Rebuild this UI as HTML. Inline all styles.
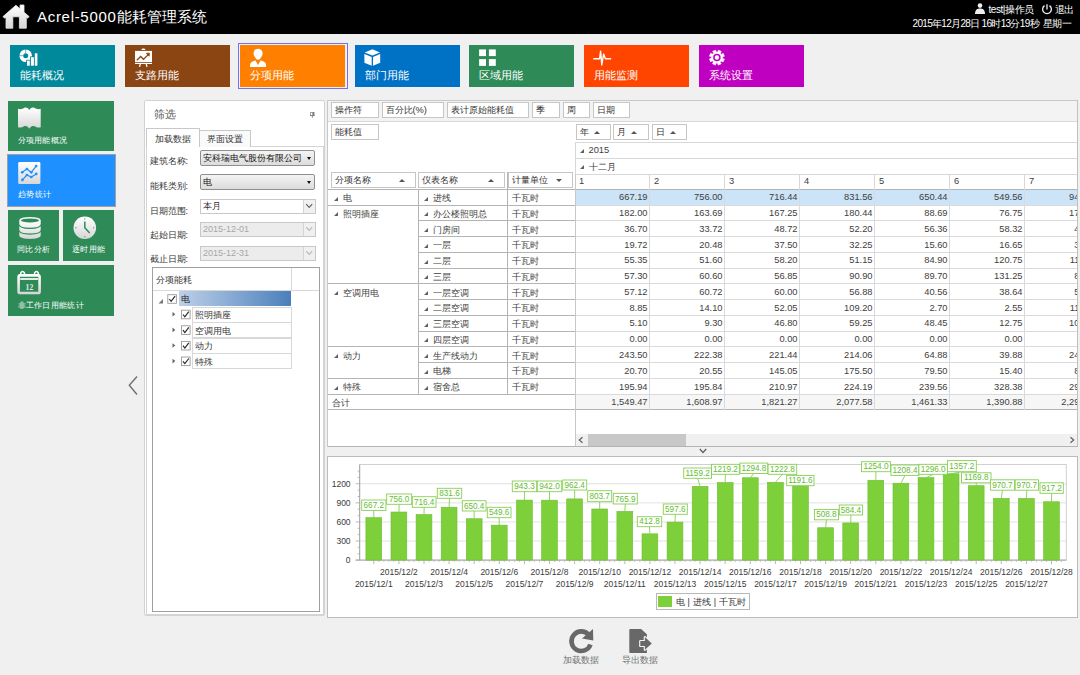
<!DOCTYPE html><html><head><meta charset="utf-8"><style>
*{margin:0;padding:0;box-sizing:border-box}
html,body{width:1080px;height:675px;overflow:hidden;background:#f0f0f0;font-family:"Liberation Sans",sans-serif;color:#333}
.a{position:absolute}
.nw{white-space:nowrap}
.hdr{left:0;top:0;width:1080px;height:34px;background:#000}
.tile{height:42px;top:45px;width:105px;color:#fff}
.tile .t{position:absolute;left:9.5px;top:24px;font-size:10.5px;line-height:13px;white-space:nowrap}
.tile svg{position:absolute;left:9px;top:4px}
.lt{color:#fff;background:#2e8b57}
.lt .t{position:absolute;left:9.5px;font-size:8px;line-height:11px;letter-spacing:0.3px;white-space:nowrap}
.lbl{position:absolute;left:149.5px;font-size:9px;line-height:12px;color:#333;white-space:nowrap}
.cb{position:absolute;left:200px;width:115px;height:16px;border:1px solid #8f8f8f;border-radius:2px;background:linear-gradient(#f4f4f4,#dcdcdc);font-size:9px;line-height:15px;padding-left:2px;color:#111;white-space:nowrap;overflow:hidden}
.cb .tx{position:absolute;left:2px;top:0;width:99px;overflow:hidden}
.cb .ar{position:absolute;left:105.5px;top:6px;width:0;height:0;border-left:2.5px solid transparent;border-right:2.5px solid transparent;border-top:3px solid #111}
.dp{position:absolute;left:200px;width:115.5px;height:15px;border:1px solid #c8c8c8;background:#fff;font-size:9px;line-height:13px;padding-left:2px;white-space:nowrap}
.dp .btn{position:absolute;right:0;top:0;width:12px;height:13px;border-left:1px solid #d4d4d4;background:#f0f0f0}
.fb{position:absolute;height:15.5px;border:1px solid #c6c6c6;background:#fff;font-size:9.3px;line-height:15.5px;padding-left:3px;color:#333;white-space:nowrap}
.up{display:inline-block;width:0;height:0;border-left:3px solid transparent;border-right:3px solid transparent;border-bottom:3.5px solid #555;vertical-align:1.5px}
.dn{display:inline-block;width:0;height:0;border-left:3px solid transparent;border-right:3px solid transparent;border-top:3.5px solid #555;vertical-align:1.5px}
.g{position:absolute;font-size:9.3px;line-height:15.7px;color:#404040;white-space:nowrap}
</style></head><body>
<div class="a hdr"></div>
<div class="a nw" style="left:37px;top:7px;font-size:15px;line-height:20px;color:#fff"><span style="letter-spacing:0.7px">Acrel-5000</span>能耗管理系统</div>
<div class="a nw" style="left:988.5px;top:3.5px;font-size:10px;line-height:12px;color:#fff;letter-spacing:-0.45px">test|操作员</div>
<div class="a nw" style="left:1054.5px;top:3.5px;font-size:10px;line-height:12px;color:#fff;letter-spacing:-1px">退出</div>
<div class="a nw" style="left:912.5px;top:17.5px;font-size:10px;line-height:12px;color:#fff;letter-spacing:-0.68px">2015年12月28日 16时13分19秒<span style="margin-left:2px"> </span>星期一</div>
<div class="a tile" style="left:10px;background:#00899b"><div class="t">能耗概况</div></div>
<div class="a tile" style="left:125px;background:#8b4513"><div class="t">支路用能</div></div>
<div class="a tile" style="left:240px;background:#ff8000"><div class="t">分项用能</div></div>
<div class="a tile" style="left:355px;background:#0072c6"><div class="t">部门用能</div></div>
<div class="a tile" style="left:469px;background:#2e8b57"><div class="t">区域用能</div></div>
<div class="a tile" style="left:584px;background:#ff4500"><div class="t">用能监测</div></div>
<div class="a tile" style="left:699px;background:#c000c0"><div class="t">系统设置</div></div>
<div class="a" style="left:237.5px;top:42.5px;width:110px;height:46px;border:1.5px solid #7070f0"></div>
<div class="a lt" style="left:8px;top:101px;width:106px;height:50px"><div class="t" style="top:34px">分项用能概况</div></div>
<div class="a" style="left:7px;top:154px;width:108.5px;height:53px;border:1px solid #a0a0a0;background:#1e90ff"></div>
<div class="a lt" style="left:8.5px;top:155.5px;width:105.5px;height:50px;background:#1e90ff"><div class="t" style="top:33.5px">趋势统计</div></div>
<div class="a lt" style="left:8px;top:210px;width:51px;height:50.5px"><div class="t" style="top:34px;left:9px">同比分析</div></div>
<div class="a lt" style="left:63px;top:210px;width:51px;height:50.5px"><div class="t" style="top:34px;left:9px">逐时用能</div></div>
<div class="a lt" style="left:8px;top:265px;width:106px;height:50.5px"><div class="t" style="top:34.5px">非工作日用能统计</div></div>
<svg class="a" style="left:126px;top:374px" width="14" height="24"><path d="M11 2.5 L3.3 11.3 L11 20.5" fill="none" stroke="#707070" stroke-width="1.4"/></svg>
<div class="a" style="left:143.8px;top:100.2px;width:181.5px;height:516.2px;border:1px solid #d2d2d2;border-radius:2px;background:#fff"></div>
<div class="a nw" style="left:154px;top:107px;font-size:11px;line-height:14px;color:#555">筛选</div>
<div class="a" style="left:145.5px;top:146px;width:178px;height:469px;border:1px solid #d4d4d4;background:#fff"></div>
<div class="a" style="left:199px;top:129.5px;width:52px;height:17px;border:1px solid #c8c8c8;border-bottom:none;background:#fafafa;font-size:9px;line-height:17px;text-align:center;color:#333">界面设置</div>
<div class="a" style="left:146px;top:128px;width:53.5px;height:19px;border:1px solid #c8c8c8;border-bottom:none;background:#fff;font-size:9px;line-height:20.5px;text-align:center;color:#333">加载数据</div>
<div class="lbl" style="top:155px">建筑名称:</div>
<div class="lbl" style="top:180px">能耗类别:</div>
<div class="lbl" style="top:205px">日期范围:</div>
<div class="lbl" style="top:229.3px">起始日期:</div>
<div class="lbl" style="top:253.3px">截止日期:</div>
<div class="cb" style="top:149.5px"><div class="tx">安科瑞电气股份有限公司</div><div class="ar"></div></div>
<div class="cb" style="top:173.5px"><div class="tx">电</div><div class="ar"></div></div>
<div class="dp" style="top:199px">本月<div class="btn"></div></div>
<div class="dp" style="top:222px;background:#ececec;color:#a8a8a8">2015-12-01<div class="btn"></div></div>
<div class="dp" style="top:246px;background:#ececec;color:#a8a8a8">2015-12-31<div class="btn"></div></div>
<div class="a" style="left:151.5px;top:267px;width:168px;height:344.5px;border:1px solid #a0a0a0;background:#fff"></div>
<div class="a" style="left:152.5px;top:290px;width:166px;height:1px;background:#d8d8d8"></div>
<div class="a" style="left:291px;top:268px;width:1px;height:22px;background:#d8d8d8"></div>
<div class="a nw" style="left:156px;top:274px;font-size:9px;line-height:12px;color:#333">分项能耗</div>
<div class="a" style="left:179px;top:291px;width:112px;height:15px;background:linear-gradient(90deg,#bed0e8,#4a7fbc)"></div>
<div class="a nw" style="left:181px;top:292.5px;font-size:9px;line-height:13px;color:#222">电</div>
<div class="a" style="left:192px;top:306.5px;width:99.5px;height:16px;border:1px solid #d8d8d8;background:#fff"></div>
<div class="a nw" style="left:195px;top:309.0px;font-size:9px;line-height:12px;color:#333">照明插座</div>
<div class="a" style="left:192px;top:322.1px;width:99.5px;height:16px;border:1px solid #d8d8d8;background:#fff"></div>
<div class="a nw" style="left:195px;top:324.6px;font-size:9px;line-height:12px;color:#333">空调用电</div>
<div class="a" style="left:192px;top:337.7px;width:99.5px;height:16px;border:1px solid #d8d8d8;background:#fff"></div>
<div class="a nw" style="left:195px;top:340.2px;font-size:9px;line-height:12px;color:#333">动力</div>
<div class="a" style="left:192px;top:353.3px;width:99.5px;height:16px;border:1px solid #d8d8d8;background:#fff"></div>
<div class="a nw" style="left:195px;top:355.8px;font-size:9px;line-height:12px;color:#333">特殊</div>
<div class="a" style="left:327px;top:99.5px;width:751px;height:347px;border:1px solid #c8c8c8;background:#fff;overflow:hidden">
</div>
<div class="a" style="left:328px;top:100.5px;width:749px;height:21px;background:#f3f3f3;border-bottom:1px solid #d8d8d8"></div>
<div class="fb" style="left:330.5px;top:102.2px;width:48.0px">操作符</div>
<div class="fb" style="left:381.5px;top:102.2px;width:62.0px">百分比(%)</div>
<div class="fb" style="left:446.5px;top:102.2px;width:82.0px">表计原始能耗值</div>
<div class="fb" style="left:531.5px;top:102.2px;width:28.0px">季</div>
<div class="fb" style="left:562.5px;top:102.2px;width:27.0px">周</div>
<div class="fb" style="left:592.5px;top:102.2px;width:37.0px">日期</div>
<div class="fb" style="left:330.5px;top:124.3px;width:48px">能耗值</div>
<div class="fb" style="left:575.5px;top:124.4px;width:35.5px">年&nbsp;&nbsp;<i class="up"></i></div>
<div class="fb" style="left:613.3px;top:124.4px;width:35.700000000000045px">月&nbsp;&nbsp;<i class="up"></i></div>
<div class="fb" style="left:651.8px;top:124.4px;width:35.700000000000045px">日&nbsp;&nbsp;<i class="up"></i></div>
<div class="fb" style="left:330.5px;top:172px;width:85.0px">分项名称<span style="position:absolute;right:10px;top:0"><i class="up"></i></span></div>
<div class="fb" style="left:418px;top:172px;width:87px">仪表名称<span style="position:absolute;right:10px;top:0"><i class="up"></i></span></div>
<div class="fb" style="left:508px;top:172px;width:64.5px">计量单位<span style="position:absolute;right:10px;top:0"><i class="dn"></i></span></div>
<div class="a" style="left:575px;top:141.9px;width:502px;height:1px;background:#d8d8d8"></div>
<div class="a" style="left:575px;top:157.7px;width:502px;height:1px;background:#d8d8d8"></div>
<div class="a" style="left:575px;top:173.6px;width:502px;height:1px;background:#d8d8d8"></div>
<div class="a" style="left:574.5px;top:141.9px;width:1px;height:47.5px;background:#d8d8d8"></div>
<div class="a" style="left:1076.5px;top:141.9px;width:1px;height:47.5px;background:#a0a0a0"></div>
<div class="g" style="left:579.5px;top:143px"><span style="display:inline-block;width:0;height:0;border-left:4px solid transparent;border-bottom:4px solid #606060;margin-right:5px;vertical-align:0.5px"></span>2015</div>
<div class="g" style="left:579.5px;top:159.5px"><span style="display:inline-block;width:0;height:0;border-left:4px solid transparent;border-bottom:4px solid #606060;margin-right:5px;vertical-align:0.5px"></span>十二月</div>
<div class="g" style="left:579.0px;top:173.8px">1</div>
<div class="a" style="left:649.3px;top:173.6px;width:1px;height:15.7px;background:#d8d8d8"></div>
<div class="g" style="left:654.0px;top:173.8px">2</div>
<div class="a" style="left:724.3px;top:173.6px;width:1px;height:15.7px;background:#d8d8d8"></div>
<div class="g" style="left:729.0px;top:173.8px">3</div>
<div class="a" style="left:799.3px;top:173.6px;width:1px;height:15.7px;background:#d8d8d8"></div>
<div class="g" style="left:804.0px;top:173.8px">4</div>
<div class="a" style="left:874.3px;top:173.6px;width:1px;height:15.7px;background:#d8d8d8"></div>
<div class="g" style="left:879.0px;top:173.8px">5</div>
<div class="a" style="left:949.3px;top:173.6px;width:1px;height:15.7px;background:#d8d8d8"></div>
<div class="g" style="left:954.0px;top:173.8px">6</div>
<div class="a" style="left:1024.3px;top:173.6px;width:1px;height:15.7px;background:#d8d8d8"></div>
<div class="g" style="left:1029.0px;top:173.8px">7</div>
<div class="a" style="left:328px;top:189px;width:749px;height:1px;background:#b4b4b4"></div>
<div class="a" style="left:575px;top:190.3px;width:502px;height:14.76px;background:#cce4f7"></div>
<div class="a" style="left:418px;top:204.56px;width:157px;height:1px;background:#b4b4b4"></div>
<div class="a" style="left:575px;top:204.56px;width:502px;height:1px;background:#dadada"></div>
<div class="a" style="left:328px;top:204.56px;width:90px;height:1px;background:#b4b4b4"></div>
<div class="g" style="left:334px;top:191.10000000000002px"><span style="display:inline-block;width:0;height:0;border-left:4px solid transparent;border-bottom:4px solid #606060;margin-right:5px;vertical-align:0.5px"></span>电</div>
<div class="g" style="left:424px;top:191.10000000000002px"><span style="display:inline-block;width:0;height:0;border-left:4px solid transparent;border-bottom:4px solid #606060;margin-right:5px;vertical-align:0.5px"></span>进线</div>
<div class="g" style="left:512px;top:191.10000000000002px">千瓦时</div>
<div class="g" style="left:574.5px;top:190.4px;width:73px;text-align:right">667.19</div>
<div class="g" style="left:649.5px;top:190.4px;width:73px;text-align:right">756.00</div>
<div class="g" style="left:724.5px;top:190.4px;width:73px;text-align:right">716.44</div>
<div class="g" style="left:799.5px;top:190.4px;width:73px;text-align:right">831.56</div>
<div class="g" style="left:874.5px;top:190.4px;width:73px;text-align:right">650.44</div>
<div class="g" style="left:949.5px;top:190.4px;width:73px;text-align:right">549.56</div>
<div class="g" style="left:1024.5px;top:190.4px;width:73px;text-align:right">943.30</div>
<div class="a" style="left:418px;top:220.32px;width:157px;height:1px;background:#b4b4b4"></div>
<div class="a" style="left:575px;top:220.32px;width:502px;height:1px;background:#dadada"></div>
<div class="g" style="left:334px;top:206.86px"><span style="display:inline-block;width:0;height:0;border-left:4px solid transparent;border-bottom:4px solid #606060;margin-right:5px;vertical-align:0.5px"></span>照明插座</div>
<div class="g" style="left:424px;top:206.86px"><span style="display:inline-block;width:0;height:0;border-left:4px solid transparent;border-bottom:4px solid #606060;margin-right:5px;vertical-align:0.5px"></span>办公楼照明总</div>
<div class="g" style="left:512px;top:206.86px">千瓦时</div>
<div class="g" style="left:574.5px;top:206.16px;width:73px;text-align:right">182.00</div>
<div class="g" style="left:649.5px;top:206.16px;width:73px;text-align:right">163.69</div>
<div class="g" style="left:724.5px;top:206.16px;width:73px;text-align:right">167.25</div>
<div class="g" style="left:799.5px;top:206.16px;width:73px;text-align:right">180.44</div>
<div class="g" style="left:874.5px;top:206.16px;width:73px;text-align:right">88.69</div>
<div class="g" style="left:949.5px;top:206.16px;width:73px;text-align:right">76.75</div>
<div class="g" style="left:1024.5px;top:206.16px;width:73px;text-align:right">175.44</div>
<div class="a" style="left:418px;top:236.08px;width:157px;height:1px;background:#b4b4b4"></div>
<div class="a" style="left:575px;top:236.08px;width:502px;height:1px;background:#dadada"></div>
<div class="g" style="left:424px;top:222.62000000000003px"><span style="display:inline-block;width:0;height:0;border-left:4px solid transparent;border-bottom:4px solid #606060;margin-right:5px;vertical-align:0.5px"></span>门房间</div>
<div class="g" style="left:512px;top:222.62000000000003px">千瓦时</div>
<div class="g" style="left:574.5px;top:221.92000000000002px;width:73px;text-align:right">36.70</div>
<div class="g" style="left:649.5px;top:221.92000000000002px;width:73px;text-align:right">33.72</div>
<div class="g" style="left:724.5px;top:221.92000000000002px;width:73px;text-align:right">48.72</div>
<div class="g" style="left:799.5px;top:221.92000000000002px;width:73px;text-align:right">52.20</div>
<div class="g" style="left:874.5px;top:221.92000000000002px;width:73px;text-align:right">56.36</div>
<div class="g" style="left:949.5px;top:221.92000000000002px;width:73px;text-align:right">58.32</div>
<div class="g" style="left:1024.5px;top:221.92000000000002px;width:73px;text-align:right">45.20</div>
<div class="a" style="left:418px;top:251.84px;width:157px;height:1px;background:#b4b4b4"></div>
<div class="a" style="left:575px;top:251.84px;width:502px;height:1px;background:#dadada"></div>
<div class="g" style="left:424px;top:238.38000000000002px"><span style="display:inline-block;width:0;height:0;border-left:4px solid transparent;border-bottom:4px solid #606060;margin-right:5px;vertical-align:0.5px"></span>一层</div>
<div class="g" style="left:512px;top:238.38000000000002px">千瓦时</div>
<div class="g" style="left:574.5px;top:237.68px;width:73px;text-align:right">19.72</div>
<div class="g" style="left:649.5px;top:237.68px;width:73px;text-align:right">20.48</div>
<div class="g" style="left:724.5px;top:237.68px;width:73px;text-align:right">37.50</div>
<div class="g" style="left:799.5px;top:237.68px;width:73px;text-align:right">32.25</div>
<div class="g" style="left:874.5px;top:237.68px;width:73px;text-align:right">15.60</div>
<div class="g" style="left:949.5px;top:237.68px;width:73px;text-align:right">16.65</div>
<div class="g" style="left:1024.5px;top:237.68px;width:73px;text-align:right">35.10</div>
<div class="a" style="left:418px;top:267.6px;width:157px;height:1px;background:#b4b4b4"></div>
<div class="a" style="left:575px;top:267.6px;width:502px;height:1px;background:#dadada"></div>
<div class="g" style="left:424px;top:254.14000000000001px"><span style="display:inline-block;width:0;height:0;border-left:4px solid transparent;border-bottom:4px solid #606060;margin-right:5px;vertical-align:0.5px"></span>二层</div>
<div class="g" style="left:512px;top:254.14000000000001px">千瓦时</div>
<div class="g" style="left:574.5px;top:253.44px;width:73px;text-align:right">55.35</div>
<div class="g" style="left:649.5px;top:253.44px;width:73px;text-align:right">51.60</div>
<div class="g" style="left:724.5px;top:253.44px;width:73px;text-align:right">58.20</div>
<div class="g" style="left:799.5px;top:253.44px;width:73px;text-align:right">51.15</div>
<div class="g" style="left:874.5px;top:253.44px;width:73px;text-align:right">84.90</div>
<div class="g" style="left:949.5px;top:253.44px;width:73px;text-align:right">120.75</div>
<div class="g" style="left:1024.5px;top:253.44px;width:73px;text-align:right">115.20</div>
<div class="a" style="left:418px;top:283.36px;width:157px;height:1px;background:#b4b4b4"></div>
<div class="a" style="left:575px;top:283.36px;width:502px;height:1px;background:#dadada"></div>
<div class="a" style="left:328px;top:283.36px;width:90px;height:1px;background:#b4b4b4"></div>
<div class="g" style="left:424px;top:269.90000000000003px"><span style="display:inline-block;width:0;height:0;border-left:4px solid transparent;border-bottom:4px solid #606060;margin-right:5px;vertical-align:0.5px"></span>三层</div>
<div class="g" style="left:512px;top:269.90000000000003px">千瓦时</div>
<div class="g" style="left:574.5px;top:269.20000000000005px;width:73px;text-align:right">57.30</div>
<div class="g" style="left:649.5px;top:269.20000000000005px;width:73px;text-align:right">60.60</div>
<div class="g" style="left:724.5px;top:269.20000000000005px;width:73px;text-align:right">56.85</div>
<div class="g" style="left:799.5px;top:269.20000000000005px;width:73px;text-align:right">90.90</div>
<div class="g" style="left:874.5px;top:269.20000000000005px;width:73px;text-align:right">89.70</div>
<div class="g" style="left:949.5px;top:269.20000000000005px;width:73px;text-align:right">131.25</div>
<div class="g" style="left:1024.5px;top:269.20000000000005px;width:73px;text-align:right">85.40</div>
<div class="a" style="left:418px;top:299.12px;width:157px;height:1px;background:#b4b4b4"></div>
<div class="a" style="left:575px;top:299.12px;width:502px;height:1px;background:#dadada"></div>
<div class="g" style="left:334px;top:285.66px"><span style="display:inline-block;width:0;height:0;border-left:4px solid transparent;border-bottom:4px solid #606060;margin-right:5px;vertical-align:0.5px"></span>空调用电</div>
<div class="g" style="left:424px;top:285.66px"><span style="display:inline-block;width:0;height:0;border-left:4px solid transparent;border-bottom:4px solid #606060;margin-right:5px;vertical-align:0.5px"></span>一层空调</div>
<div class="g" style="left:512px;top:285.66px">千瓦时</div>
<div class="g" style="left:574.5px;top:284.96000000000004px;width:73px;text-align:right">57.12</div>
<div class="g" style="left:649.5px;top:284.96000000000004px;width:73px;text-align:right">60.72</div>
<div class="g" style="left:724.5px;top:284.96000000000004px;width:73px;text-align:right">60.00</div>
<div class="g" style="left:799.5px;top:284.96000000000004px;width:73px;text-align:right">56.88</div>
<div class="g" style="left:874.5px;top:284.96000000000004px;width:73px;text-align:right">40.56</div>
<div class="g" style="left:949.5px;top:284.96000000000004px;width:73px;text-align:right">38.64</div>
<div class="g" style="left:1024.5px;top:284.96000000000004px;width:73px;text-align:right">55.20</div>
<div class="a" style="left:418px;top:314.88px;width:157px;height:1px;background:#b4b4b4"></div>
<div class="a" style="left:575px;top:314.88px;width:502px;height:1px;background:#dadada"></div>
<div class="g" style="left:424px;top:301.42px"><span style="display:inline-block;width:0;height:0;border-left:4px solid transparent;border-bottom:4px solid #606060;margin-right:5px;vertical-align:0.5px"></span>二层空调</div>
<div class="g" style="left:512px;top:301.42px">千瓦时</div>
<div class="g" style="left:574.5px;top:300.72px;width:73px;text-align:right">8.85</div>
<div class="g" style="left:649.5px;top:300.72px;width:73px;text-align:right">14.10</div>
<div class="g" style="left:724.5px;top:300.72px;width:73px;text-align:right">52.05</div>
<div class="g" style="left:799.5px;top:300.72px;width:73px;text-align:right">109.20</div>
<div class="g" style="left:874.5px;top:300.72px;width:73px;text-align:right">2.70</div>
<div class="g" style="left:949.5px;top:300.72px;width:73px;text-align:right">2.55</div>
<div class="g" style="left:1024.5px;top:300.72px;width:73px;text-align:right">112.05</div>
<div class="a" style="left:418px;top:330.64px;width:157px;height:1px;background:#b4b4b4"></div>
<div class="a" style="left:575px;top:330.64px;width:502px;height:1px;background:#dadada"></div>
<div class="g" style="left:424px;top:317.18px"><span style="display:inline-block;width:0;height:0;border-left:4px solid transparent;border-bottom:4px solid #606060;margin-right:5px;vertical-align:0.5px"></span>三层空调</div>
<div class="g" style="left:512px;top:317.18px">千瓦时</div>
<div class="g" style="left:574.5px;top:316.48px;width:73px;text-align:right">5.10</div>
<div class="g" style="left:649.5px;top:316.48px;width:73px;text-align:right">9.30</div>
<div class="g" style="left:724.5px;top:316.48px;width:73px;text-align:right">46.80</div>
<div class="g" style="left:799.5px;top:316.48px;width:73px;text-align:right">59.25</div>
<div class="g" style="left:874.5px;top:316.48px;width:73px;text-align:right">48.45</div>
<div class="g" style="left:949.5px;top:316.48px;width:73px;text-align:right">12.75</div>
<div class="g" style="left:1024.5px;top:316.48px;width:73px;text-align:right">105.30</div>
<div class="a" style="left:418px;top:346.4px;width:157px;height:1px;background:#b4b4b4"></div>
<div class="a" style="left:575px;top:346.4px;width:502px;height:1px;background:#dadada"></div>
<div class="a" style="left:328px;top:346.4px;width:90px;height:1px;background:#b4b4b4"></div>
<div class="g" style="left:424px;top:332.94px"><span style="display:inline-block;width:0;height:0;border-left:4px solid transparent;border-bottom:4px solid #606060;margin-right:5px;vertical-align:0.5px"></span>四层空调</div>
<div class="g" style="left:512px;top:332.94px">千瓦时</div>
<div class="g" style="left:574.5px;top:332.24px;width:73px;text-align:right">0.00</div>
<div class="g" style="left:649.5px;top:332.24px;width:73px;text-align:right">0.00</div>
<div class="g" style="left:724.5px;top:332.24px;width:73px;text-align:right">0.00</div>
<div class="g" style="left:799.5px;top:332.24px;width:73px;text-align:right">0.00</div>
<div class="g" style="left:874.5px;top:332.24px;width:73px;text-align:right">0.00</div>
<div class="g" style="left:949.5px;top:332.24px;width:73px;text-align:right">0.00</div>
<div class="g" style="left:1024.5px;top:332.24px;width:73px;text-align:right">0.00</div>
<div class="a" style="left:418px;top:362.15999999999997px;width:157px;height:1px;background:#b4b4b4"></div>
<div class="a" style="left:575px;top:362.15999999999997px;width:502px;height:1px;background:#dadada"></div>
<div class="g" style="left:334px;top:348.7px"><span style="display:inline-block;width:0;height:0;border-left:4px solid transparent;border-bottom:4px solid #606060;margin-right:5px;vertical-align:0.5px"></span>动力</div>
<div class="g" style="left:424px;top:348.7px"><span style="display:inline-block;width:0;height:0;border-left:4px solid transparent;border-bottom:4px solid #606060;margin-right:5px;vertical-align:0.5px"></span>生产线动力</div>
<div class="g" style="left:512px;top:348.7px">千瓦时</div>
<div class="g" style="left:574.5px;top:348.0px;width:73px;text-align:right">243.50</div>
<div class="g" style="left:649.5px;top:348.0px;width:73px;text-align:right">222.38</div>
<div class="g" style="left:724.5px;top:348.0px;width:73px;text-align:right">221.44</div>
<div class="g" style="left:799.5px;top:348.0px;width:73px;text-align:right">214.06</div>
<div class="g" style="left:874.5px;top:348.0px;width:73px;text-align:right">64.88</div>
<div class="g" style="left:949.5px;top:348.0px;width:73px;text-align:right">39.88</div>
<div class="g" style="left:1024.5px;top:348.0px;width:73px;text-align:right">245.10</div>
<div class="a" style="left:418px;top:377.91999999999996px;width:157px;height:1px;background:#b4b4b4"></div>
<div class="a" style="left:575px;top:377.91999999999996px;width:502px;height:1px;background:#dadada"></div>
<div class="a" style="left:328px;top:377.91999999999996px;width:90px;height:1px;background:#b4b4b4"></div>
<div class="g" style="left:424px;top:364.46px"><span style="display:inline-block;width:0;height:0;border-left:4px solid transparent;border-bottom:4px solid #606060;margin-right:5px;vertical-align:0.5px"></span>电梯</div>
<div class="g" style="left:512px;top:364.46px">千瓦时</div>
<div class="g" style="left:574.5px;top:363.76px;width:73px;text-align:right">20.70</div>
<div class="g" style="left:649.5px;top:363.76px;width:73px;text-align:right">20.55</div>
<div class="g" style="left:724.5px;top:363.76px;width:73px;text-align:right">145.05</div>
<div class="g" style="left:799.5px;top:363.76px;width:73px;text-align:right">175.50</div>
<div class="g" style="left:874.5px;top:363.76px;width:73px;text-align:right">79.50</div>
<div class="g" style="left:949.5px;top:363.76px;width:73px;text-align:right">15.40</div>
<div class="g" style="left:1024.5px;top:363.76px;width:73px;text-align:right">85.20</div>
<div class="a" style="left:418px;top:393.68px;width:157px;height:1px;background:#b4b4b4"></div>
<div class="a" style="left:575px;top:393.68px;width:502px;height:1px;background:#dadada"></div>
<div class="a" style="left:328px;top:393.68px;width:90px;height:1px;background:#b4b4b4"></div>
<div class="g" style="left:334px;top:380.22px"><span style="display:inline-block;width:0;height:0;border-left:4px solid transparent;border-bottom:4px solid #606060;margin-right:5px;vertical-align:0.5px"></span>特殊</div>
<div class="g" style="left:424px;top:380.22px"><span style="display:inline-block;width:0;height:0;border-left:4px solid transparent;border-bottom:4px solid #606060;margin-right:5px;vertical-align:0.5px"></span>宿舍总</div>
<div class="g" style="left:512px;top:380.22px">千瓦时</div>
<div class="g" style="left:574.5px;top:379.52000000000004px;width:73px;text-align:right">195.94</div>
<div class="g" style="left:649.5px;top:379.52000000000004px;width:73px;text-align:right">195.84</div>
<div class="g" style="left:724.5px;top:379.52000000000004px;width:73px;text-align:right">210.97</div>
<div class="g" style="left:799.5px;top:379.52000000000004px;width:73px;text-align:right">224.19</div>
<div class="g" style="left:874.5px;top:379.52000000000004px;width:73px;text-align:right">239.56</div>
<div class="g" style="left:949.5px;top:379.52000000000004px;width:73px;text-align:right">328.38</div>
<div class="g" style="left:1024.5px;top:379.52000000000004px;width:73px;text-align:right">295.10</div>
<div class="a" style="left:575px;top:394.68px;width:502px;height:14.76px;background:#f6f6f6"></div>
<div class="g" style="left:332px;top:395.98px">合计</div>
<div class="g" style="left:574.5px;top:395.28000000000003px;width:73px;text-align:right">1,549.47</div>
<div class="g" style="left:649.5px;top:395.28000000000003px;width:73px;text-align:right">1,608.97</div>
<div class="g" style="left:724.5px;top:395.28000000000003px;width:73px;text-align:right">1,821.27</div>
<div class="g" style="left:799.5px;top:395.28000000000003px;width:73px;text-align:right">2,077.58</div>
<div class="g" style="left:874.5px;top:395.28000000000003px;width:73px;text-align:right">1,461.33</div>
<div class="g" style="left:949.5px;top:395.28000000000003px;width:73px;text-align:right">1,390.88</div>
<div class="g" style="left:1024.5px;top:395.28000000000003px;width:73px;text-align:right">2,293.50</div>
<div class="a" style="left:328px;top:409.44px;width:749px;height:1px;background:#b4b4b4"></div>
<div class="a" style="left:417.5px;top:189.3px;width:1px;height:204.88px;background:#b4b4b4"></div>
<div class="a" style="left:507px;top:172px;width:1px;height:221.88px;background:#b4b4b4"></div>
<div class="a" style="left:574.5px;top:173.6px;width:1px;height:273.64px;background:#c8c8c8"></div>
<div class="a" style="left:649.3px;top:189.3px;width:1px;height:220.64px;background:#dadada"></div>
<div class="a" style="left:724.3px;top:189.3px;width:1px;height:220.64px;background:#dadada"></div>
<div class="a" style="left:799.3px;top:189.3px;width:1px;height:220.64px;background:#dadada"></div>
<div class="a" style="left:874.3px;top:189.3px;width:1px;height:220.64px;background:#dadada"></div>
<div class="a" style="left:949.3px;top:189.3px;width:1px;height:220.64px;background:#dadada"></div>
<div class="a" style="left:1024.3px;top:189.3px;width:1px;height:220.64px;background:#dadada"></div>
<div class="a" style="left:1077.5px;top:99px;width:3px;height:350px;background:#f0f0f0"></div>
<div class="a" style="left:1076.8px;top:99.5px;width:1px;height:347px;background:#c0c0c0"></div>
<div class="a" style="left:575.5px;top:433.8px;width:501.5px;height:12.2px;background:#f0f0f0"></div>
<div class="a" style="left:588px;top:434px;width:98px;height:12px;background:#c8c8c8"></div>
<svg class="a" style="left:577px;top:436px" width="8" height="8"><path d="M5.5 1.2 L2.3 4 L5.5 6.8" fill="none" stroke="#606060" stroke-width="1.2"/></svg>
<svg class="a" style="left:1068px;top:436px" width="8" height="8"><path d="M2.5 1.2 L5.7 4 L2.5 6.8" fill="none" stroke="#606060" stroke-width="1.2"/></svg>
<svg class="a" style="left:698px;top:447px" width="10" height="8"><path d="M1.8 2 L5 5.5 L8.2 2" fill="none" stroke="#606060" stroke-width="1.3"/></svg>
<div class="a" style="left:327.5px;top:446px;width:750px;height:1px;background:#b4b4b4"></div>
<div class="a" style="left:327px;top:456px;width:751.3px;height:161.5px;border:1px solid #bcbcbc;background:#fff"></div>
<svg class="a" style="left:0;top:0;font-family:Liberation Sans,sans-serif" width="1080" height="675"><line x1="359.66" y1="541.02" x2="1066.3" y2="541.02" stroke="#e2e2e2" stroke-width="1"/><line x1="359.66" y1="521.94" x2="1066.3" y2="521.94" stroke="#e2e2e2" stroke-width="1"/><line x1="359.66" y1="502.86" x2="1066.3" y2="502.86" stroke="#e2e2e2" stroke-width="1"/><line x1="359.66" y1="483.78000000000003" x2="1066.3" y2="483.78000000000003" stroke="#e2e2e2" stroke-width="1"/><rect x="359.66" y="464.5" width="706.6399999999999" height="95.60000000000002" fill="none" stroke="#d0d0d0" stroke-width="1"/><line x1="359.66" y1="464.5" x2="359.66" y2="560.1" stroke="#a8a8a8" stroke-width="1"/><line x1="355.66" y1="560.1" x2="1066.3" y2="560.1" stroke="#a8a8a8" stroke-width="1"/><line x1="355.66" y1="560.1" x2="359.66" y2="560.1" stroke="#a8a8a8" stroke-width="0.8"/><line x1="357.66" y1="553.74" x2="359.66" y2="553.74" stroke="#a8a8a8" stroke-width="0.8"/><line x1="357.66" y1="547.38" x2="359.66" y2="547.38" stroke="#a8a8a8" stroke-width="0.8"/><line x1="355.66" y1="541.02" x2="359.66" y2="541.02" stroke="#a8a8a8" stroke-width="0.8"/><line x1="357.66" y1="534.66" x2="359.66" y2="534.66" stroke="#a8a8a8" stroke-width="0.8"/><line x1="357.66" y1="528.3000000000001" x2="359.66" y2="528.3000000000001" stroke="#a8a8a8" stroke-width="0.8"/><line x1="355.66" y1="521.94" x2="359.66" y2="521.94" stroke="#a8a8a8" stroke-width="0.8"/><line x1="357.66" y1="515.58" x2="359.66" y2="515.58" stroke="#a8a8a8" stroke-width="0.8"/><line x1="357.66" y1="509.22" x2="359.66" y2="509.22" stroke="#a8a8a8" stroke-width="0.8"/><line x1="355.66" y1="502.86" x2="359.66" y2="502.86" stroke="#a8a8a8" stroke-width="0.8"/><line x1="357.66" y1="496.5" x2="359.66" y2="496.5" stroke="#a8a8a8" stroke-width="0.8"/><line x1="357.66" y1="490.14" x2="359.66" y2="490.14" stroke="#a8a8a8" stroke-width="0.8"/><line x1="355.66" y1="483.78000000000003" x2="359.66" y2="483.78000000000003" stroke="#a8a8a8" stroke-width="0.8"/><line x1="357.66" y1="477.42" x2="359.66" y2="477.42" stroke="#a8a8a8" stroke-width="0.8"/><line x1="357.66" y1="471.06" x2="359.66" y2="471.06" stroke="#a8a8a8" stroke-width="0.8"/><text x="350.6" y="563.1" text-anchor="end" font-size="8.5" fill="#3a3a3a">0</text><text x="350.6" y="544.02" text-anchor="end" font-size="8.5" fill="#3a3a3a">300</text><text x="350.6" y="524.94" text-anchor="end" font-size="8.5" fill="#3a3a3a">600</text><text x="350.6" y="505.86" text-anchor="end" font-size="8.5" fill="#3a3a3a">900</text><text x="350.6" y="486.78000000000003" text-anchor="end" font-size="8.5" fill="#3a3a3a">1200</text><rect x="365.90000000000003" y="517.6667160000001" width="15.8" height="42.43328399999996" fill="#7ed03b" stroke="#6cbd2e" stroke-width="0.6"/><line x1="373.8" y1="560.1" x2="373.8" y2="564.1" stroke="#a8a8a8" stroke-width="0.8"/><line x1="378.82" y1="560.1" x2="378.82" y2="562.1" stroke="#a8a8a8" stroke-width="0.6"/><line x1="383.84000000000003" y1="560.1" x2="383.84000000000003" y2="562.1" stroke="#a8a8a8" stroke-width="0.6"/><line x1="388.86" y1="560.1" x2="388.86" y2="562.1" stroke="#a8a8a8" stroke-width="0.6"/><line x1="393.88" y1="560.1" x2="393.88" y2="562.1" stroke="#a8a8a8" stroke-width="0.6"/><text x="373.8" y="586.5" text-anchor="middle" font-size="8.5" fill="#3a3a3a">2015/12/1</text><rect x="391.00000000000006" y="512.0184" width="15.8" height="48.08159999999998" fill="#7ed03b" stroke="#6cbd2e" stroke-width="0.6"/><line x1="398.90000000000003" y1="560.1" x2="398.90000000000003" y2="564.1" stroke="#a8a8a8" stroke-width="0.8"/><line x1="403.92" y1="560.1" x2="403.92" y2="562.1" stroke="#a8a8a8" stroke-width="0.6"/><line x1="408.94000000000005" y1="560.1" x2="408.94000000000005" y2="562.1" stroke="#a8a8a8" stroke-width="0.6"/><line x1="413.96000000000004" y1="560.1" x2="413.96000000000004" y2="562.1" stroke="#a8a8a8" stroke-width="0.6"/><line x1="418.98" y1="560.1" x2="418.98" y2="562.1" stroke="#a8a8a8" stroke-width="0.6"/><text x="398.90000000000003" y="575.3" text-anchor="middle" font-size="8.5" fill="#3a3a3a">2015/12/2</text><rect x="416.1" y="514.534416" width="15.8" height="45.56558400000006" fill="#7ed03b" stroke="#6cbd2e" stroke-width="0.6"/><line x1="424.0" y1="560.1" x2="424.0" y2="564.1" stroke="#a8a8a8" stroke-width="0.8"/><line x1="429.02" y1="560.1" x2="429.02" y2="562.1" stroke="#a8a8a8" stroke-width="0.6"/><line x1="434.04" y1="560.1" x2="434.04" y2="562.1" stroke="#a8a8a8" stroke-width="0.6"/><line x1="439.06" y1="560.1" x2="439.06" y2="562.1" stroke="#a8a8a8" stroke-width="0.6"/><line x1="444.08" y1="560.1" x2="444.08" y2="562.1" stroke="#a8a8a8" stroke-width="0.6"/><text x="424.0" y="586.5" text-anchor="middle" font-size="8.5" fill="#3a3a3a">2015/12/3</text><rect x="441.20000000000005" y="507.212784" width="15.8" height="52.88721600000002" fill="#7ed03b" stroke="#6cbd2e" stroke-width="0.6"/><line x1="449.1" y1="560.1" x2="449.1" y2="564.1" stroke="#a8a8a8" stroke-width="0.8"/><line x1="454.12" y1="560.1" x2="454.12" y2="562.1" stroke="#a8a8a8" stroke-width="0.6"/><line x1="459.14000000000004" y1="560.1" x2="459.14000000000004" y2="562.1" stroke="#a8a8a8" stroke-width="0.6"/><line x1="464.16" y1="560.1" x2="464.16" y2="562.1" stroke="#a8a8a8" stroke-width="0.6"/><line x1="469.18" y1="560.1" x2="469.18" y2="562.1" stroke="#a8a8a8" stroke-width="0.6"/><text x="449.1" y="575.3" text-anchor="middle" font-size="8.5" fill="#3a3a3a">2015/12/4</text><rect x="466.30000000000007" y="518.732016" width="15.8" height="41.36798399999998" fill="#7ed03b" stroke="#6cbd2e" stroke-width="0.6"/><line x1="474.20000000000005" y1="560.1" x2="474.20000000000005" y2="564.1" stroke="#a8a8a8" stroke-width="0.8"/><line x1="479.22" y1="560.1" x2="479.22" y2="562.1" stroke="#a8a8a8" stroke-width="0.6"/><line x1="484.24000000000007" y1="560.1" x2="484.24000000000007" y2="562.1" stroke="#a8a8a8" stroke-width="0.6"/><line x1="489.26000000000005" y1="560.1" x2="489.26000000000005" y2="562.1" stroke="#a8a8a8" stroke-width="0.6"/><line x1="494.28000000000003" y1="560.1" x2="494.28000000000003" y2="562.1" stroke="#a8a8a8" stroke-width="0.6"/><text x="474.20000000000005" y="586.5" text-anchor="middle" font-size="8.5" fill="#3a3a3a">2015/12/5</text><rect x="491.40000000000003" y="525.1479840000001" width="15.8" height="34.95201599999996" fill="#7ed03b" stroke="#6cbd2e" stroke-width="0.6"/><line x1="499.3" y1="560.1" x2="499.3" y2="564.1" stroke="#a8a8a8" stroke-width="0.8"/><line x1="504.32" y1="560.1" x2="504.32" y2="562.1" stroke="#a8a8a8" stroke-width="0.6"/><line x1="509.34000000000003" y1="560.1" x2="509.34000000000003" y2="562.1" stroke="#a8a8a8" stroke-width="0.6"/><line x1="514.36" y1="560.1" x2="514.36" y2="562.1" stroke="#a8a8a8" stroke-width="0.6"/><line x1="519.38" y1="560.1" x2="519.38" y2="562.1" stroke="#a8a8a8" stroke-width="0.6"/><text x="499.3" y="575.3" text-anchor="middle" font-size="8.5" fill="#3a3a3a">2015/12/6</text><rect x="516.5000000000001" y="500.10612000000003" width="15.8" height="59.99387999999999" fill="#7ed03b" stroke="#6cbd2e" stroke-width="0.6"/><line x1="524.4000000000001" y1="560.1" x2="524.4000000000001" y2="564.1" stroke="#a8a8a8" stroke-width="0.8"/><line x1="529.4200000000001" y1="560.1" x2="529.4200000000001" y2="562.1" stroke="#a8a8a8" stroke-width="0.6"/><line x1="534.44" y1="560.1" x2="534.44" y2="562.1" stroke="#a8a8a8" stroke-width="0.6"/><line x1="539.46" y1="560.1" x2="539.46" y2="562.1" stroke="#a8a8a8" stroke-width="0.6"/><line x1="544.4800000000001" y1="560.1" x2="544.4800000000001" y2="562.1" stroke="#a8a8a8" stroke-width="0.6"/><text x="524.4000000000001" y="586.5" text-anchor="middle" font-size="8.5" fill="#3a3a3a">2015/12/7</text><rect x="541.6" y="500.186256" width="15.8" height="59.91374400000001" fill="#7ed03b" stroke="#6cbd2e" stroke-width="0.6"/><line x1="549.5" y1="560.1" x2="549.5" y2="564.1" stroke="#a8a8a8" stroke-width="0.8"/><line x1="554.52" y1="560.1" x2="554.52" y2="562.1" stroke="#a8a8a8" stroke-width="0.6"/><line x1="559.54" y1="560.1" x2="559.54" y2="562.1" stroke="#a8a8a8" stroke-width="0.6"/><line x1="564.56" y1="560.1" x2="564.56" y2="562.1" stroke="#a8a8a8" stroke-width="0.6"/><line x1="569.58" y1="560.1" x2="569.58" y2="562.1" stroke="#a8a8a8" stroke-width="0.6"/><text x="549.5" y="575.3" text-anchor="middle" font-size="8.5" fill="#3a3a3a">2015/12/8</text><rect x="566.7" y="498.888816" width="15.8" height="61.211184" fill="#7ed03b" stroke="#6cbd2e" stroke-width="0.6"/><line x1="574.6" y1="560.1" x2="574.6" y2="564.1" stroke="#a8a8a8" stroke-width="0.8"/><line x1="579.62" y1="560.1" x2="579.62" y2="562.1" stroke="#a8a8a8" stroke-width="0.6"/><line x1="584.64" y1="560.1" x2="584.64" y2="562.1" stroke="#a8a8a8" stroke-width="0.6"/><line x1="589.6600000000001" y1="560.1" x2="589.6600000000001" y2="562.1" stroke="#a8a8a8" stroke-width="0.6"/><line x1="594.6800000000001" y1="560.1" x2="594.6800000000001" y2="562.1" stroke="#a8a8a8" stroke-width="0.6"/><text x="574.6" y="586.5" text-anchor="middle" font-size="8.5" fill="#3a3a3a">2015/12/9</text><rect x="591.8000000000001" y="508.985316" width="15.8" height="51.11468400000001" fill="#7ed03b" stroke="#6cbd2e" stroke-width="0.6"/><line x1="599.7" y1="560.1" x2="599.7" y2="564.1" stroke="#a8a8a8" stroke-width="0.8"/><line x1="604.72" y1="560.1" x2="604.72" y2="562.1" stroke="#a8a8a8" stroke-width="0.6"/><line x1="609.74" y1="560.1" x2="609.74" y2="562.1" stroke="#a8a8a8" stroke-width="0.6"/><line x1="614.76" y1="560.1" x2="614.76" y2="562.1" stroke="#a8a8a8" stroke-width="0.6"/><line x1="619.7800000000001" y1="560.1" x2="619.7800000000001" y2="562.1" stroke="#a8a8a8" stroke-width="0.6"/><text x="599.7" y="575.3" text-anchor="middle" font-size="8.5" fill="#3a3a3a">2015/12/10</text><rect x="616.9" y="511.386216" width="15.8" height="48.71378400000003" fill="#7ed03b" stroke="#6cbd2e" stroke-width="0.6"/><line x1="624.8" y1="560.1" x2="624.8" y2="564.1" stroke="#a8a8a8" stroke-width="0.8"/><line x1="629.8199999999999" y1="560.1" x2="629.8199999999999" y2="562.1" stroke="#a8a8a8" stroke-width="0.6"/><line x1="634.8399999999999" y1="560.1" x2="634.8399999999999" y2="562.1" stroke="#a8a8a8" stroke-width="0.6"/><line x1="639.8599999999999" y1="560.1" x2="639.8599999999999" y2="562.1" stroke="#a8a8a8" stroke-width="0.6"/><line x1="644.88" y1="560.1" x2="644.88" y2="562.1" stroke="#a8a8a8" stroke-width="0.6"/><text x="624.8" y="586.5" text-anchor="middle" font-size="8.5" fill="#3a3a3a">2015/12/11</text><rect x="642.0000000000001" y="533.845284" width="15.8" height="26.25471600000003" fill="#7ed03b" stroke="#6cbd2e" stroke-width="0.6"/><line x1="649.9000000000001" y1="560.1" x2="649.9000000000001" y2="564.1" stroke="#a8a8a8" stroke-width="0.8"/><line x1="654.9200000000001" y1="560.1" x2="654.9200000000001" y2="562.1" stroke="#a8a8a8" stroke-width="0.6"/><line x1="659.94" y1="560.1" x2="659.94" y2="562.1" stroke="#a8a8a8" stroke-width="0.6"/><line x1="664.96" y1="560.1" x2="664.96" y2="562.1" stroke="#a8a8a8" stroke-width="0.6"/><line x1="669.9800000000001" y1="560.1" x2="669.9800000000001" y2="562.1" stroke="#a8a8a8" stroke-width="0.6"/><text x="649.9000000000001" y="575.3" text-anchor="middle" font-size="8.5" fill="#3a3a3a">2015/12/12</text><rect x="667.1" y="522.095184" width="15.8" height="38.004816000000005" fill="#7ed03b" stroke="#6cbd2e" stroke-width="0.6"/><line x1="675.0" y1="560.1" x2="675.0" y2="564.1" stroke="#a8a8a8" stroke-width="0.8"/><line x1="680.02" y1="560.1" x2="680.02" y2="562.1" stroke="#a8a8a8" stroke-width="0.6"/><line x1="685.04" y1="560.1" x2="685.04" y2="562.1" stroke="#a8a8a8" stroke-width="0.6"/><line x1="690.06" y1="560.1" x2="690.06" y2="562.1" stroke="#a8a8a8" stroke-width="0.6"/><line x1="695.08" y1="560.1" x2="695.08" y2="562.1" stroke="#a8a8a8" stroke-width="0.6"/><text x="675.0" y="586.5" text-anchor="middle" font-size="8.5" fill="#3a3a3a">2015/12/13</text><rect x="692.2" y="486.375516" width="15.8" height="73.72448400000002" fill="#7ed03b" stroke="#6cbd2e" stroke-width="0.6"/><line x1="700.1" y1="560.1" x2="700.1" y2="564.1" stroke="#a8a8a8" stroke-width="0.8"/><line x1="705.12" y1="560.1" x2="705.12" y2="562.1" stroke="#a8a8a8" stroke-width="0.6"/><line x1="710.14" y1="560.1" x2="710.14" y2="562.1" stroke="#a8a8a8" stroke-width="0.6"/><line x1="715.1600000000001" y1="560.1" x2="715.1600000000001" y2="562.1" stroke="#a8a8a8" stroke-width="0.6"/><line x1="720.1800000000001" y1="560.1" x2="720.1800000000001" y2="562.1" stroke="#a8a8a8" stroke-width="0.6"/><text x="700.1" y="575.3" text-anchor="middle" font-size="8.5" fill="#3a3a3a">2015/12/14</text><rect x="717.3000000000001" y="482.55951600000003" width="15.8" height="77.54048399999999" fill="#7ed03b" stroke="#6cbd2e" stroke-width="0.6"/><line x1="725.2" y1="560.1" x2="725.2" y2="564.1" stroke="#a8a8a8" stroke-width="0.8"/><line x1="730.22" y1="560.1" x2="730.22" y2="562.1" stroke="#a8a8a8" stroke-width="0.6"/><line x1="735.24" y1="560.1" x2="735.24" y2="562.1" stroke="#a8a8a8" stroke-width="0.6"/><line x1="740.26" y1="560.1" x2="740.26" y2="562.1" stroke="#a8a8a8" stroke-width="0.6"/><line x1="745.2800000000001" y1="560.1" x2="745.2800000000001" y2="562.1" stroke="#a8a8a8" stroke-width="0.6"/><text x="725.2" y="586.5" text-anchor="middle" font-size="8.5" fill="#3a3a3a">2015/12/15</text><rect x="742.4" y="477.750084" width="15.8" height="82.34991600000001" fill="#7ed03b" stroke="#6cbd2e" stroke-width="0.6"/><line x1="750.3" y1="560.1" x2="750.3" y2="564.1" stroke="#a8a8a8" stroke-width="0.8"/><line x1="755.3199999999999" y1="560.1" x2="755.3199999999999" y2="562.1" stroke="#a8a8a8" stroke-width="0.6"/><line x1="760.3399999999999" y1="560.1" x2="760.3399999999999" y2="562.1" stroke="#a8a8a8" stroke-width="0.6"/><line x1="765.3599999999999" y1="560.1" x2="765.3599999999999" y2="562.1" stroke="#a8a8a8" stroke-width="0.6"/><line x1="770.38" y1="560.1" x2="770.38" y2="562.1" stroke="#a8a8a8" stroke-width="0.6"/><text x="750.3" y="575.3" text-anchor="middle" font-size="8.5" fill="#3a3a3a">2015/12/16</text><rect x="767.5000000000001" y="482.32928400000003" width="15.8" height="77.770716" fill="#7ed03b" stroke="#6cbd2e" stroke-width="0.6"/><line x1="775.4000000000001" y1="560.1" x2="775.4000000000001" y2="564.1" stroke="#a8a8a8" stroke-width="0.8"/><line x1="780.4200000000001" y1="560.1" x2="780.4200000000001" y2="562.1" stroke="#a8a8a8" stroke-width="0.6"/><line x1="785.44" y1="560.1" x2="785.44" y2="562.1" stroke="#a8a8a8" stroke-width="0.6"/><line x1="790.46" y1="560.1" x2="790.46" y2="562.1" stroke="#a8a8a8" stroke-width="0.6"/><line x1="795.4800000000001" y1="560.1" x2="795.4800000000001" y2="562.1" stroke="#a8a8a8" stroke-width="0.6"/><text x="775.4000000000001" y="586.5" text-anchor="middle" font-size="8.5" fill="#3a3a3a">2015/12/17</text><rect x="792.6" y="484.31678400000004" width="15.8" height="75.78321599999998" fill="#7ed03b" stroke="#6cbd2e" stroke-width="0.6"/><line x1="800.5" y1="560.1" x2="800.5" y2="564.1" stroke="#a8a8a8" stroke-width="0.8"/><line x1="805.52" y1="560.1" x2="805.52" y2="562.1" stroke="#a8a8a8" stroke-width="0.6"/><line x1="810.54" y1="560.1" x2="810.54" y2="562.1" stroke="#a8a8a8" stroke-width="0.6"/><line x1="815.56" y1="560.1" x2="815.56" y2="562.1" stroke="#a8a8a8" stroke-width="0.6"/><line x1="820.58" y1="560.1" x2="820.58" y2="562.1" stroke="#a8a8a8" stroke-width="0.6"/><text x="800.5" y="575.3" text-anchor="middle" font-size="8.5" fill="#3a3a3a">2015/12/18</text><rect x="817.7" y="527.739684" width="15.8" height="32.36031600000001" fill="#7ed03b" stroke="#6cbd2e" stroke-width="0.6"/><line x1="825.6" y1="560.1" x2="825.6" y2="564.1" stroke="#a8a8a8" stroke-width="0.8"/><line x1="830.62" y1="560.1" x2="830.62" y2="562.1" stroke="#a8a8a8" stroke-width="0.6"/><line x1="835.64" y1="560.1" x2="835.64" y2="562.1" stroke="#a8a8a8" stroke-width="0.6"/><line x1="840.6600000000001" y1="560.1" x2="840.6600000000001" y2="562.1" stroke="#a8a8a8" stroke-width="0.6"/><line x1="845.6800000000001" y1="560.1" x2="845.6800000000001" y2="562.1" stroke="#a8a8a8" stroke-width="0.6"/><text x="825.6" y="586.5" text-anchor="middle" font-size="8.5" fill="#3a3a3a">2015/12/19</text><rect x="842.8000000000001" y="522.929616" width="15.8" height="37.17038400000001" fill="#7ed03b" stroke="#6cbd2e" stroke-width="0.6"/><line x1="850.7" y1="560.1" x2="850.7" y2="564.1" stroke="#a8a8a8" stroke-width="0.8"/><line x1="855.72" y1="560.1" x2="855.72" y2="562.1" stroke="#a8a8a8" stroke-width="0.6"/><line x1="860.74" y1="560.1" x2="860.74" y2="562.1" stroke="#a8a8a8" stroke-width="0.6"/><line x1="865.76" y1="560.1" x2="865.76" y2="562.1" stroke="#a8a8a8" stroke-width="0.6"/><line x1="870.7800000000001" y1="560.1" x2="870.7800000000001" y2="562.1" stroke="#a8a8a8" stroke-width="0.6"/><text x="850.7" y="575.3" text-anchor="middle" font-size="8.5" fill="#3a3a3a">2015/12/20</text><rect x="867.9" y="480.3456" width="15.8" height="79.75440000000003" fill="#7ed03b" stroke="#6cbd2e" stroke-width="0.6"/><line x1="875.8" y1="560.1" x2="875.8" y2="564.1" stroke="#a8a8a8" stroke-width="0.8"/><line x1="880.8199999999999" y1="560.1" x2="880.8199999999999" y2="562.1" stroke="#a8a8a8" stroke-width="0.6"/><line x1="885.8399999999999" y1="560.1" x2="885.8399999999999" y2="562.1" stroke="#a8a8a8" stroke-width="0.6"/><line x1="890.8599999999999" y1="560.1" x2="890.8599999999999" y2="562.1" stroke="#a8a8a8" stroke-width="0.6"/><line x1="895.88" y1="560.1" x2="895.88" y2="562.1" stroke="#a8a8a8" stroke-width="0.6"/><text x="875.8" y="586.5" text-anchor="middle" font-size="8.5" fill="#3a3a3a">2015/12/21</text><rect x="893.0000000000001" y="483.243216" width="15.8" height="76.856784" fill="#7ed03b" stroke="#6cbd2e" stroke-width="0.6"/><line x1="900.9000000000001" y1="560.1" x2="900.9000000000001" y2="564.1" stroke="#a8a8a8" stroke-width="0.8"/><line x1="905.9200000000001" y1="560.1" x2="905.9200000000001" y2="562.1" stroke="#a8a8a8" stroke-width="0.6"/><line x1="910.94" y1="560.1" x2="910.94" y2="562.1" stroke="#a8a8a8" stroke-width="0.6"/><line x1="915.96" y1="560.1" x2="915.96" y2="562.1" stroke="#a8a8a8" stroke-width="0.6"/><line x1="920.9800000000001" y1="560.1" x2="920.9800000000001" y2="562.1" stroke="#a8a8a8" stroke-width="0.6"/><text x="900.9000000000001" y="575.3" text-anchor="middle" font-size="8.5" fill="#3a3a3a">2015/12/22</text><rect x="918.1" y="477.6744" width="15.8" height="82.42560000000003" fill="#7ed03b" stroke="#6cbd2e" stroke-width="0.6"/><line x1="926.0" y1="560.1" x2="926.0" y2="564.1" stroke="#a8a8a8" stroke-width="0.8"/><line x1="931.02" y1="560.1" x2="931.02" y2="562.1" stroke="#a8a8a8" stroke-width="0.6"/><line x1="936.04" y1="560.1" x2="936.04" y2="562.1" stroke="#a8a8a8" stroke-width="0.6"/><line x1="941.06" y1="560.1" x2="941.06" y2="562.1" stroke="#a8a8a8" stroke-width="0.6"/><line x1="946.08" y1="560.1" x2="946.08" y2="562.1" stroke="#a8a8a8" stroke-width="0.6"/><text x="926.0" y="586.5" text-anchor="middle" font-size="8.5" fill="#3a3a3a">2015/12/23</text><rect x="943.2000000000002" y="473.782716" width="15.8" height="86.31728400000003" fill="#7ed03b" stroke="#6cbd2e" stroke-width="0.6"/><line x1="951.1000000000001" y1="560.1" x2="951.1000000000001" y2="564.1" stroke="#a8a8a8" stroke-width="0.8"/><line x1="956.1200000000001" y1="560.1" x2="956.1200000000001" y2="562.1" stroke="#a8a8a8" stroke-width="0.6"/><line x1="961.1400000000001" y1="560.1" x2="961.1400000000001" y2="562.1" stroke="#a8a8a8" stroke-width="0.6"/><line x1="966.1600000000001" y1="560.1" x2="966.1600000000001" y2="562.1" stroke="#a8a8a8" stroke-width="0.6"/><line x1="971.1800000000002" y1="560.1" x2="971.1800000000002" y2="562.1" stroke="#a8a8a8" stroke-width="0.6"/><text x="951.1000000000001" y="575.3" text-anchor="middle" font-size="8.5" fill="#3a3a3a">2015/12/24</text><rect x="968.3000000000001" y="485.700084" width="15.8" height="74.39991600000002" fill="#7ed03b" stroke="#6cbd2e" stroke-width="0.6"/><line x1="976.2" y1="560.1" x2="976.2" y2="564.1" stroke="#a8a8a8" stroke-width="0.8"/><line x1="981.22" y1="560.1" x2="981.22" y2="562.1" stroke="#a8a8a8" stroke-width="0.6"/><line x1="986.24" y1="560.1" x2="986.24" y2="562.1" stroke="#a8a8a8" stroke-width="0.6"/><line x1="991.26" y1="560.1" x2="991.26" y2="562.1" stroke="#a8a8a8" stroke-width="0.6"/><line x1="996.2800000000001" y1="560.1" x2="996.2800000000001" y2="562.1" stroke="#a8a8a8" stroke-width="0.6"/><text x="976.2" y="586.5" text-anchor="middle" font-size="8.5" fill="#3a3a3a">2015/12/25</text><rect x="993.4" y="498.364116" width="15.8" height="61.735884" fill="#7ed03b" stroke="#6cbd2e" stroke-width="0.6"/><line x1="1001.3" y1="560.1" x2="1001.3" y2="564.1" stroke="#a8a8a8" stroke-width="0.8"/><line x1="1006.3199999999999" y1="560.1" x2="1006.3199999999999" y2="562.1" stroke="#a8a8a8" stroke-width="0.6"/><line x1="1011.3399999999999" y1="560.1" x2="1011.3399999999999" y2="562.1" stroke="#a8a8a8" stroke-width="0.6"/><line x1="1016.3599999999999" y1="560.1" x2="1016.3599999999999" y2="562.1" stroke="#a8a8a8" stroke-width="0.6"/><line x1="1021.38" y1="560.1" x2="1021.38" y2="562.1" stroke="#a8a8a8" stroke-width="0.6"/><text x="1001.3" y="575.3" text-anchor="middle" font-size="8.5" fill="#3a3a3a">2015/12/26</text><rect x="1018.5000000000001" y="498.364116" width="15.8" height="61.735884" fill="#7ed03b" stroke="#6cbd2e" stroke-width="0.6"/><line x1="1026.4" y1="560.1" x2="1026.4" y2="564.1" stroke="#a8a8a8" stroke-width="0.8"/><line x1="1031.42" y1="560.1" x2="1031.42" y2="562.1" stroke="#a8a8a8" stroke-width="0.6"/><line x1="1036.44" y1="560.1" x2="1036.44" y2="562.1" stroke="#a8a8a8" stroke-width="0.6"/><line x1="1041.46" y1="560.1" x2="1041.46" y2="562.1" stroke="#a8a8a8" stroke-width="0.6"/><line x1="1046.48" y1="560.1" x2="1046.48" y2="562.1" stroke="#a8a8a8" stroke-width="0.6"/><text x="1026.4" y="586.5" text-anchor="middle" font-size="8.5" fill="#3a3a3a">2015/12/27</text><rect x="1043.6" y="501.76671600000003" width="15.8" height="58.33328399999999" fill="#7ed03b" stroke="#6cbd2e" stroke-width="0.6"/><line x1="1051.5" y1="560.1" x2="1051.5" y2="564.1" stroke="#a8a8a8" stroke-width="0.8"/><line x1="1056.52" y1="560.1" x2="1056.52" y2="562.1" stroke="#a8a8a8" stroke-width="0.6"/><line x1="1061.54" y1="560.1" x2="1061.54" y2="562.1" stroke="#a8a8a8" stroke-width="0.6"/><text x="1051.5" y="575.3" text-anchor="middle" font-size="8.5" fill="#3a3a3a">2015/12/28</text><line x1="373.79999999999995" y1="510.4" x2="373.8" y2="517.6667160000001" stroke="#86cf52" stroke-width="0.9"/><rect x="361.7" y="500" width="24.19999999999999" height="10.399999999999977" fill="#fff" stroke="#86cf52" stroke-width="0.9"/><text x="373.79999999999995" y="508.0" text-anchor="middle" font-size="8.2" fill="#66bb33">667.2</text><line x1="399.2" y1="504.3" x2="398.90000000000003" y2="512.0184" stroke="#86cf52" stroke-width="0.9"/><rect x="386.7" y="494" width="25.0" height="10.300000000000011" fill="#fff" stroke="#86cf52" stroke-width="0.9"/><text x="399.2" y="501.90000000000003" text-anchor="middle" font-size="8.2" fill="#66bb33">756.0</text><line x1="424.15" y1="507.3" x2="424.0" y2="514.534416" stroke="#86cf52" stroke-width="0.9"/><rect x="412.3" y="496.7" width="23.69999999999999" height="10.600000000000023" fill="#fff" stroke="#86cf52" stroke-width="0.9"/><text x="424.15" y="504.90000000000003" text-anchor="middle" font-size="8.2" fill="#66bb33">716.4</text><line x1="449.5" y1="498.3" x2="449.1" y2="507.212784" stroke="#86cf52" stroke-width="0.9"/><rect x="437.3" y="488.3" width="24.399999999999977" height="10.0" fill="#fff" stroke="#86cf52" stroke-width="0.9"/><text x="449.5" y="495.90000000000003" text-anchor="middle" font-size="8.2" fill="#66bb33">831.6</text><line x1="474.15" y1="511" x2="474.20000000000005" y2="518.732016" stroke="#86cf52" stroke-width="0.9"/><rect x="462.3" y="500.7" width="23.69999999999999" height="10.300000000000011" fill="#fff" stroke="#86cf52" stroke-width="0.9"/><text x="474.15" y="508.6" text-anchor="middle" font-size="8.2" fill="#66bb33">650.4</text><line x1="499.15" y1="517.7" x2="499.3" y2="525.1479840000001" stroke="#86cf52" stroke-width="0.9"/><rect x="487.3" y="507.3" width="23.69999999999999" height="10.400000000000034" fill="#fff" stroke="#86cf52" stroke-width="0.9"/><text x="499.15" y="515.3000000000001" text-anchor="middle" font-size="8.2" fill="#66bb33">549.6</text><line x1="524.5" y1="491.7" x2="524.4000000000001" y2="500.10612000000003" stroke="#86cf52" stroke-width="0.9"/><rect x="512.3" y="481" width="24.40000000000009" height="10.699999999999989" fill="#fff" stroke="#86cf52" stroke-width="0.9"/><text x="524.5" y="489.3" text-anchor="middle" font-size="8.2" fill="#66bb33">943.3</text><line x1="549.5" y1="491.7" x2="549.5" y2="500.186256" stroke="#86cf52" stroke-width="0.9"/><rect x="537.3" y="481" width="24.40000000000009" height="10.699999999999989" fill="#fff" stroke="#86cf52" stroke-width="0.9"/><text x="549.5" y="489.3" text-anchor="middle" font-size="8.2" fill="#66bb33">942.0</text><line x1="574.7" y1="490" x2="574.6" y2="498.888816" stroke="#86cf52" stroke-width="0.9"/><rect x="562.7" y="480" width="24.0" height="10" fill="#fff" stroke="#86cf52" stroke-width="0.9"/><text x="574.7" y="487.6" text-anchor="middle" font-size="8.2" fill="#66bb33">962.4</text><line x1="599.7" y1="501.7" x2="599.7" y2="508.985316" stroke="#86cf52" stroke-width="0.9"/><rect x="587.7" y="490.7" width="24.0" height="11.0" fill="#fff" stroke="#86cf52" stroke-width="0.9"/><text x="599.7" y="499.3" text-anchor="middle" font-size="8.2" fill="#66bb33">803.7</text><line x1="625.3" y1="504" x2="624.8" y2="511.386216" stroke="#86cf52" stroke-width="0.9"/><rect x="613.3" y="493.3" width="24.0" height="10.699999999999989" fill="#fff" stroke="#86cf52" stroke-width="0.9"/><text x="625.3" y="501.6" text-anchor="middle" font-size="8.2" fill="#66bb33">765.9</text><line x1="649.5" y1="526.7" x2="649.9000000000001" y2="533.845284" stroke="#86cf52" stroke-width="0.9"/><rect x="637.3" y="516.7" width="24.40000000000009" height="10.0" fill="#fff" stroke="#86cf52" stroke-width="0.9"/><text x="649.5" y="524.3000000000001" text-anchor="middle" font-size="8.2" fill="#66bb33">412.8</text><line x1="675.3" y1="514.3" x2="675.0" y2="522.095184" stroke="#86cf52" stroke-width="0.9"/><rect x="663.3" y="504" width="24.0" height="10.299999999999955" fill="#fff" stroke="#86cf52" stroke-width="0.9"/><text x="675.3" y="511.9" text-anchor="middle" font-size="8.2" fill="#66bb33">597.6</text><line x1="697.6" y1="478.3" x2="700.1" y2="486.375516" stroke="#86cf52" stroke-width="0.9"/><rect x="683.7" y="468" width="27.799999999999955" height="10.300000000000011" fill="#fff" stroke="#86cf52" stroke-width="0.9"/><text x="697.6" y="475.90000000000003" text-anchor="middle" font-size="8.2" fill="#66bb33">1159.2</text><line x1="725.4" y1="474.3" x2="725.2" y2="482.55951600000003" stroke="#86cf52" stroke-width="0.9"/><rect x="711.5" y="464.3" width="27.799999999999955" height="10.0" fill="#fff" stroke="#86cf52" stroke-width="0.9"/><text x="725.4" y="471.90000000000003" text-anchor="middle" font-size="8.2" fill="#66bb33">1219.2</text><line x1="753.9" y1="473.5" x2="750.3" y2="477.750084" stroke="#86cf52" stroke-width="0.9"/><rect x="740" y="463.1" width="27.799999999999955" height="10.399999999999977" fill="#fff" stroke="#86cf52" stroke-width="0.9"/><text x="753.9" y="471.1" text-anchor="middle" font-size="8.2" fill="#66bb33">1294.8</text><line x1="782.4000000000001" y1="474.3" x2="775.4000000000001" y2="482.32928400000003" stroke="#86cf52" stroke-width="0.9"/><rect x="768.1" y="464.3" width="28.600000000000023" height="10.0" fill="#fff" stroke="#86cf52" stroke-width="0.9"/><text x="782.4000000000001" y="471.90000000000003" text-anchor="middle" font-size="8.2" fill="#66bb33">1222.8</text><line x1="800.35" y1="485.7" x2="800.5" y2="484.31678400000004" stroke="#86cf52" stroke-width="0.9"/><rect x="786.7" y="475.4" width="27.299999999999955" height="10.300000000000011" fill="#fff" stroke="#86cf52" stroke-width="0.9"/><text x="800.35" y="483.3" text-anchor="middle" font-size="8.2" fill="#66bb33">1191.6</text><line x1="826.45" y1="519.8" x2="825.6" y2="527.739684" stroke="#86cf52" stroke-width="0.9"/><rect x="814.4" y="509.4" width="24.100000000000023" height="10.399999999999977" fill="#fff" stroke="#86cf52" stroke-width="0.9"/><text x="826.45" y="517.4" text-anchor="middle" font-size="8.2" fill="#66bb33">508.8</text><line x1="850.95" y1="515" x2="850.7" y2="522.929616" stroke="#86cf52" stroke-width="0.9"/><rect x="839.3" y="505" width="23.300000000000068" height="10" fill="#fff" stroke="#86cf52" stroke-width="0.9"/><text x="850.95" y="512.6" text-anchor="middle" font-size="8.2" fill="#66bb33">584.4</text><line x1="875.95" y1="471.7" x2="875.8" y2="480.3456" stroke="#86cf52" stroke-width="0.9"/><rect x="861.5" y="461.7" width="28.899999999999977" height="10.0" fill="#fff" stroke="#86cf52" stroke-width="0.9"/><text x="875.95" y="469.3" text-anchor="middle" font-size="8.2" fill="#66bb33">1254.0</text><line x1="904.95" y1="475.4" x2="900.9000000000001" y2="483.243216" stroke="#86cf52" stroke-width="0.9"/><rect x="891" y="465" width="27.899999999999977" height="10.399999999999977" fill="#fff" stroke="#86cf52" stroke-width="0.9"/><text x="904.95" y="473.0" text-anchor="middle" font-size="8.2" fill="#66bb33">1208.4</text><line x1="933.15" y1="474.3" x2="926.0" y2="477.6744" stroke="#86cf52" stroke-width="0.9"/><rect x="918.9" y="464.3" width="28.5" height="10.0" fill="#fff" stroke="#86cf52" stroke-width="0.9"/><text x="933.15" y="471.90000000000003" text-anchor="middle" font-size="8.2" fill="#66bb33">1296.0</text><line x1="961.8499999999999" y1="471.7" x2="951.1000000000001" y2="473.782716" stroke="#86cf52" stroke-width="0.9"/><rect x="947.4" y="460.6" width="28.899999999999977" height="11.099999999999966" fill="#fff" stroke="#86cf52" stroke-width="0.9"/><text x="961.8499999999999" y="469.3" text-anchor="middle" font-size="8.2" fill="#66bb33">1357.2</text><line x1="976.25" y1="482.8" x2="976.2" y2="485.700084" stroke="#86cf52" stroke-width="0.9"/><rect x="961.5" y="472.8" width="29.5" height="10.0" fill="#fff" stroke="#86cf52" stroke-width="0.9"/><text x="976.25" y="480.40000000000003" text-anchor="middle" font-size="8.2" fill="#66bb33">1169.8</text><line x1="1002.4" y1="490.2" x2="1001.3" y2="498.364116" stroke="#86cf52" stroke-width="0.9"/><rect x="990.4" y="479.8" width="24.0" height="10.399999999999977" fill="#fff" stroke="#86cf52" stroke-width="0.9"/><text x="1002.4" y="487.8" text-anchor="middle" font-size="8.2" fill="#66bb33">970.7</text><line x1="1026.85" y1="490.2" x2="1026.4" y2="498.364116" stroke="#86cf52" stroke-width="0.9"/><rect x="1015.2" y="479.8" width="23.299999999999955" height="10.399999999999977" fill="#fff" stroke="#86cf52" stroke-width="0.9"/><text x="1026.85" y="487.8" text-anchor="middle" font-size="8.2" fill="#66bb33">970.7</text><line x1="1051.65" y1="493.3" x2="1051.5" y2="501.76671600000003" stroke="#86cf52" stroke-width="0.9"/><rect x="1040" y="482.8" width="23.299999999999955" height="10.5" fill="#fff" stroke="#86cf52" stroke-width="0.9"/><text x="1051.65" y="490.90000000000003" text-anchor="middle" font-size="8.2" fill="#66bb33">917.2</text></svg>
<div class="a" style="left:655.6px;top:593.4px;width:94px;height:16.3px;border:1px solid #b8b8b8;background:#fff"></div>
<div class="a" style="left:658.3px;top:596px;width:13.6px;height:10.7px;background:#7ed03b"></div>
<div class="a nw" style="left:675.5px;top:596px;font-size:9px;line-height:12px;color:#333">电<span style="margin:0 3px">|</span>进线<span style="margin:0 3px">|</span>千瓦时</div>
<div class="a nw" style="left:563px;top:654px;font-size:9px;line-height:12px;color:#707070">加载数据</div>
<div class="a nw" style="left:621.5px;top:654px;font-size:9px;line-height:12px;color:#707070">导出数据</div>
<svg class="a" style="left:0;top:0" width="1080" height="675"><defs><linearGradient id="gw" x1="0" y1="0" x2="0" y2="1"><stop offset="0" stop-color="#ffffff"/><stop offset="1" stop-color="#d6d6d6"/></linearGradient></defs><path d="M3 16.6 L15.9 5.2 L20 8.8 L20 5 L24 5 L24 12.2 L29.1 16.6 L27.6 18.2 L26.3 17.2 L26.3 28.2 L19.4 28.2 L19.4 16.8 L12.8 16.8 L12.8 28.2 L6 28.2 L6 17.2 L4.5 18.2 Z" fill="url(#gw)" stroke="#e8e8e8" stroke-width="0.8" stroke-linejoin="round"/><circle cx="980" cy="5.6" r="2.3" fill="#eee"/><path d="M975 14 C975 9.5 977.5 8.6 980 8.6 C982.5 8.6 985 9.5 985 14 Z" fill="#eee"/><path d="M1044.5 5.6 A4.4 4.4 0 1 0 1049.5 5.6" fill="none" stroke="#eee" stroke-width="1.3"/><line x1="1047" y1="4.2" x2="1047" y2="9.4" stroke="#eee" stroke-width="1.3"/><circle cx="25.7" cy="55.7" r="4.4" fill="none" stroke="#fff" stroke-width="3.8"/><line x1="25.7" y1="49" x2="25.7" y2="53" stroke="#00899b" stroke-width="0.6"/><line x1="19" y1="55.7" x2="23" y2="55.7" stroke="#00899b" stroke-width="0.6"/><rect x="26.2" y="59.8" width="12" height="7" fill="#00899b"/><rect x="30.1" y="56.4" width="8" height="4" fill="#00899b"/><rect x="27" y="60.6" width="2.8" height="5.1" fill="#fff"/><rect x="30.9" y="57.2" width="3" height="8.5" fill="#fff"/><rect x="34.8" y="53.3" width="2.6" height="12.4" fill="#fff"/><rect x="135" y="50.9" width="17" height="11.3" fill="#fff"/><path d="M141.1 50 L142.5 48.5 L144.3 48.5 L145.7 50 Z" fill="#fff"/><rect x="135" y="63" width="17" height="1" fill="#fff"/><path d="M140.3 64 L139.5 66.9 M146.2 64 L147 66.9" stroke="#fff" stroke-width="1.3"/><path d="M136.8 60.2 L140.7 56.5 L143.5 59.3 L148.3 54.6" fill="none" stroke="#8b4513" stroke-width="1.3"/><path d="M146.3 53.4 L149.4 53.1 L149.1 56.2 Z" fill="#8b4513" stroke="#8b4513" stroke-width="0.8"/><path d="M253.6 53.2 C253.6 50.2 255.8 48.7 258.1 48.7 C260.5 48.7 262.6 50.2 262.6 53.2 C262.6 55 262 56.2 261.4 56.8 L260 59 C259.2 59.9 257 59.9 256.2 59 L254.8 56.8 C254.2 56.2 253.6 55 253.6 53.2 Z" fill="#fff"/><path d="M250 66.9 L250 64.8 C250.5 62.2 252.5 61.3 255.6 60.6 L258 65 L260.5 60.6 C263.6 61.3 265.6 62.2 266.1 64.8 L266.1 66.9 Z" fill="#fff"/><path d="M372.4 49.3 L380 52.6 L372.4 55.6 L364.6 52.6 Z" fill="#fff"/><path d="M364.4 53.9 L371.7 56.9 L371.7 65.7 L364.4 62.8 Z" fill="#fff"/><path d="M373 56.9 L380.2 53.9 L380.2 62.8 L373 65.7 Z" fill="#fff"/><rect x="479.1" y="49.4" width="6.9" height="6.7" fill="#fff"/><rect x="488.9" y="49.4" width="6.9" height="6.7" fill="#fff"/><rect x="479.1" y="59.1" width="6.9" height="6.8" fill="#fff"/><rect x="488.9" y="59.1" width="6.9" height="6.8" fill="#fff"/><path d="M593.2 58.7 L599.6 58.7 L600.6 51.1 L601.8 65 L603.6 54.1 L605.4 58.7 L611.1 58.7" fill="none" stroke="#fff" stroke-width="1.4" stroke-linejoin="round"/><path d="M724.37 58.98 L723.16 61.90 L721.22 61.16 L720.07 62.22 L721.20 63.86 L718.28 65.07 L717.44 63.17 L715.88 63.11 L715.52 65.07 L712.60 63.86 L713.34 61.92 L712.28 60.77 L710.64 61.90 L709.43 58.98 L711.33 58.14 L711.39 56.58 L709.43 56.22 L710.64 53.30 L712.58 54.04 L713.73 52.98 L712.60 51.34 L715.52 50.13 L716.36 52.03 L717.92 52.09 L718.28 50.13 L721.20 51.34 L720.46 53.28 L721.52 54.43 L723.16 53.30 L724.37 56.22 L722.47 57.06 L722.41 58.62 Z" fill="#fff" stroke="#fff" stroke-width="0.6" stroke-linejoin="round"/><circle cx="716.9" cy="57.6" r="3" fill="none" stroke="#c000c0" stroke-width="1.5"/><path d="M18 108.8 C20.5 109.6 22.5 108.8 24 108 C25.5 107.3 27.5 107.2 29.3 110.1 C31 107.2 33.2 107.3 34.6 108 C36.2 108.8 38.3 109.6 40.7 108.8 L40.7 127.3 C38.3 128 36.3 127.2 34.6 126.3 C33 125.5 31 125.6 29.3 128.8 C27.6 125.6 25.6 125.5 24 126.3 C22.3 127.2 20.4 128 18 127.3 Z" fill="url(#gw)"/><rect x="18.2" y="162.1" width="22.2" height="22" rx="1.3" fill="url(#gw)"/><path d="M22.2 172.3 L26.9 169 L31.3 172.3 L36.2 166.1" fill="none" stroke="#1e90ff" stroke-width="1.2"/><path d="M22.4 179.9 L26.9 175 L31.3 177 L36.2 173.9" fill="none" stroke="#1e90ff" stroke-width="1.2"/><circle cx="22.2" cy="172.3" r="1.35" fill="#1e90ff"/><circle cx="26.9" cy="169" r="1.35" fill="#1e90ff"/><circle cx="31.3" cy="172.3" r="1.35" fill="#1e90ff"/><circle cx="36.2" cy="166.1" r="1.35" fill="#1e90ff"/><circle cx="22.4" cy="179.9" r="1.35" fill="#1e90ff"/><circle cx="26.9" cy="175" r="1.35" fill="#1e90ff"/><circle cx="31.3" cy="177" r="1.35" fill="#1e90ff"/><circle cx="36.2" cy="173.9" r="1.35" fill="#1e90ff"/><path d="M19.3 220.3 L19.3 235.5 C19.3 240 40.7 240 40.7 235.5 L40.7 220.3 Z" fill="url(#gw)"/><ellipse cx="30" cy="220.2" rx="10.7" ry="3.3" fill="#f6f6f6"/><ellipse cx="30" cy="220.4" rx="9" ry="2" fill="#2e8b57"/><path d="M19.3 224.8 C19.3 229.6 40.7 229.6 40.7 224.8" fill="none" stroke="#2e8b57" stroke-width="1.1"/><path d="M19.3 230.6 C19.3 235.3 40.7 235.3 40.7 230.6" fill="none" stroke="#2e8b57" stroke-width="1.1"/><circle cx="84.8" cy="227.8" r="11.3" fill="url(#gw)"/><path d="M84.8 221.4 L84.8 227.8 L89.7 232.9" fill="none" stroke="#2e8b57" stroke-width="1.5"/><circle cx="84.8" cy="218.9" r="0.7" fill="#5aa87c"/><circle cx="93.7" cy="227.8" r="0.7" fill="#5aa87c"/><circle cx="84.8" cy="236.7" r="0.7" fill="#5aa87c"/><circle cx="75.9" cy="227.8" r="0.7" fill="#5aa87c"/><rect x="18.6" y="275.4" width="21" height="17.6" rx="1.6" fill="none" stroke="url(#gw)" stroke-width="2.6"/><rect x="20.2" y="278.1" width="17.8" height="1.8" fill="#fff" opacity="0.95"/><path d="M20.5 275 L20.9 272.6 Q22.6 270.5 24.3 272.6 L24.8 275" fill="none" stroke="#fff" stroke-width="1.5"/><path d="M34.3 275 L34.7 272.6 Q36.4 270.5 38.1 272.6 L38.6 275" fill="none" stroke="#fff" stroke-width="1.5"/><text x="29.4" y="290" text-anchor="middle" font-family="Liberation Serif,serif" font-weight="bold" font-size="7.6" fill="#e8e8e8">12</text><rect x="310.6" y="112.4" width="3.4" height="3" fill="none" stroke="#8a8a8a" stroke-width="0.8"/><rect x="312.4" y="112.2" width="1.7" height="3.3" fill="#7a7a7a"/><line x1="310" y1="115.6" x2="314.7" y2="115.6" stroke="#7a7a7a" stroke-width="0.8"/><line x1="312.4" y1="115.6" x2="312.4" y2="117.8" stroke="#7a7a7a" stroke-width="0.8"/><path d="M588.8 634.9 A9.8 9.8 0 1 0 590.5 644.55" fill="none" stroke="#686868" stroke-width="4.6"/><path d="M593 628.9 L593.3 640.4 L582 638.6 Z" fill="#686868"/><path d="M630.2 629 L641.1 629 L646.9 634.3 L646.9 653 L630.2 653 Q629.3 653 629.3 652 L629.3 630 Q629.3 629 630.2 629 Z" fill="#686868"/><path d="M640.3 641.1 L644.9 641.1 L644.9 637.1 L651.8 643.4 L644.9 649.7 L644.9 645.9 L640.3 645.9 Z" fill="#686868" stroke="#f0f0f0" stroke-width="2.4" stroke-linejoin="round" paint-order="stroke"/></svg>
<svg class="a" style="left:0;top:0" width="1080" height="675"><path d="M163 299 L163 303.5 L158.5 303.5 Z" fill="#777"/><rect x="167.8" y="294.7" width="8.6" height="8.6" fill="#fff" stroke="#9a9a9a" stroke-width="0.9"/><path d="M169.3 299.0 L171.14000000000001 301.40000000000003 L175.1 296.2" fill="none" stroke="#222" stroke-width="1.1"/><path d="M172.5 312.0 L175.3 314.3 L172.5 316.6 Z" fill="#666"/><rect x="181.5" y="310.2" width="8.6" height="8.6" fill="#fff" stroke="#9a9a9a" stroke-width="0.9"/><path d="M183 314.5 L184.84 316.90000000000003 L188.79999999999998 311.7" fill="none" stroke="#222" stroke-width="1.1"/><path d="M172.5 327.6 L175.3 329.90000000000003 L172.5 332.20000000000005 Z" fill="#666"/><rect x="181.5" y="325.8" width="8.6" height="8.6" fill="#fff" stroke="#9a9a9a" stroke-width="0.9"/><path d="M183 330.1 L184.84 332.50000000000006 L188.79999999999998 327.3" fill="none" stroke="#222" stroke-width="1.1"/><path d="M172.5 343.2 L175.3 345.5 L172.5 347.8 Z" fill="#666"/><rect x="181.5" y="341.4" width="8.6" height="8.6" fill="#fff" stroke="#9a9a9a" stroke-width="0.9"/><path d="M183 345.7 L184.84 348.1 L188.79999999999998 342.9" fill="none" stroke="#222" stroke-width="1.1"/><path d="M172.5 358.8 L175.3 361.1 L172.5 363.40000000000003 Z" fill="#666"/><rect x="181.5" y="357.0" width="8.6" height="8.6" fill="#fff" stroke="#9a9a9a" stroke-width="0.9"/><path d="M183 361.3 L184.84 363.70000000000005 L188.79999999999998 358.5" fill="none" stroke="#222" stroke-width="1.1"/><path d="M306.2 204.2 L309.2 207.4 L312.2 204.2" fill="none" stroke="#606060" stroke-width="1.1"/><path d="M306.2 227.2 L309.2 230.4 L312.2 227.2" fill="none" stroke="#b8b8b8" stroke-width="1.1"/><path d="M306.2 251.2 L309.2 254.4 L312.2 251.2" fill="none" stroke="#b8b8b8" stroke-width="1.1"/></svg>
</body></html>
